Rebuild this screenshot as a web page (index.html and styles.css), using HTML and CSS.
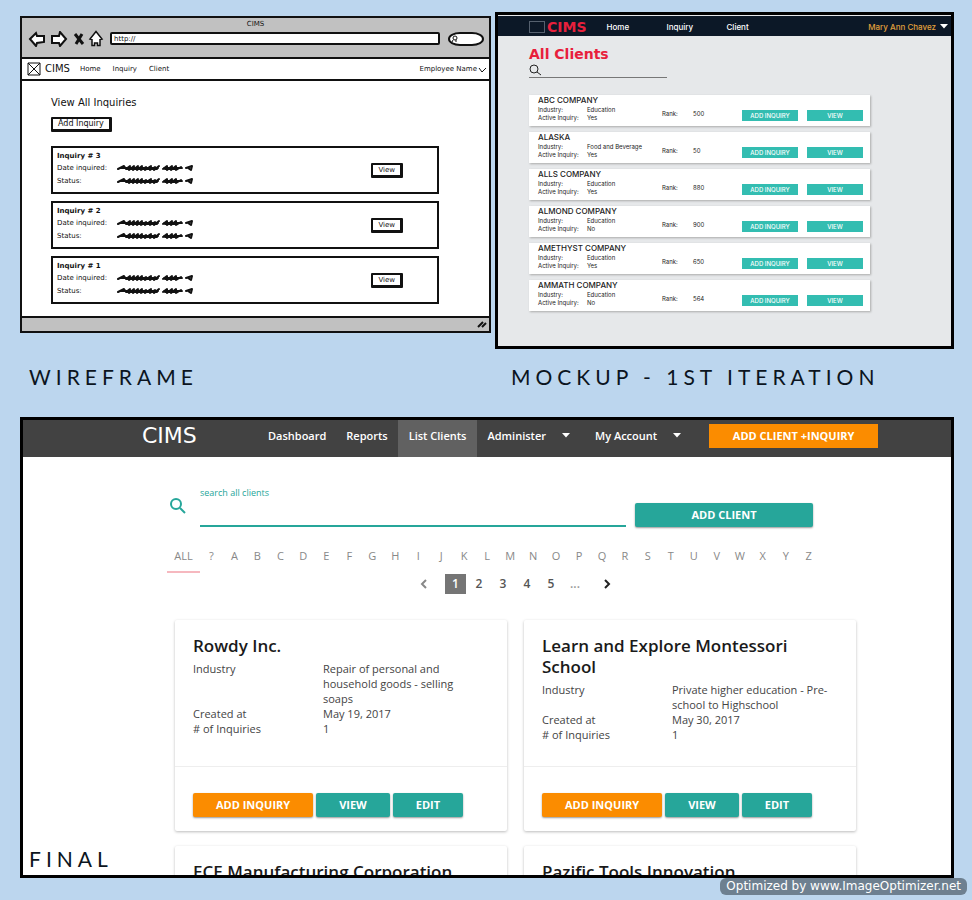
FILE: index.html
```html
<!DOCTYPE html>
<html lang="en">
<head>
<meta charset="utf-8">
<title>CIMS design stages</title>
<link rel="stylesheet" href="styles.css">
</head>
<body>
<svg class="defs" aria-hidden="true">
  <symbol id="scribble" viewBox="0 0 76 8">
    <path d="M1 5 7 2 9 5 13 2 12 6 17 2 16 6 21 2 20 6 25 2 24 6 29 3 28 6 34 2 33 6 38 3 37 6 42 2M4 4H41M9 5H40M46 5 50 2 50 6 55 2 54 6 59 2 59 6 64 3M47 4H65M48 5H60M69 4 75 2 74 6 71 4" fill="none" stroke="#111" stroke-width="2" stroke-linejoin="round" stroke-linecap="round"/>
  </symbol>
  <symbol id="caret" viewBox="0 0 8 5"><path d="M0 0H8L4 4.500Z" fill="currentColor"/></symbol>
</svg>
<main class="board">
  <div class="stages">
    <figure class="stage stage-wire">
      <div class="wire">
        <header class="browser">
          <div class="browser-title">CIMS</div>
          <div class="browser-bar">
            <svg class="arrow" viewBox="0 0 18 16"><path d="M2 8 8 2 9 5 16 5 16 11 9 12 8 15Z"/></svg>
            <svg class="arrow" viewBox="0 0 18 16"><path d="M16 8 10 1 9 5 2 5 2 12 9 12 10 15Z"/></svg>
            <svg class="stop" viewBox="0 0 12 16"><path d="M2 3 10 13M9 3 3 13"/></svg>
            <svg class="house" viewBox="0 0 16 17"><path d="M8 1.500 14 9 12 9.500 12 15.500 9.500 15.500 9.500 13 6.500 13 6.500 15.500 4 15.500 4 9.500 2 9Z"/></svg>
            <input class="url" type="text" value="http://" aria-label="Address">
            <span class="lens"><svg viewBox="0 0 8 8"><circle cx="5" cy="3" r="2"/><path d="M3 5 2 7M6 5V7"/></svg></span>
          </div>
        </header>
        <nav class="wire-nav">
          <svg class="cross" viewBox="0 0 14 14"><path d="M1 1H13V13H1ZM1 1 13 13M13 1 1 13"/></svg>
          <b>CIMS</b>
          <a href="#">Home</a><a href="#">Inquiry</a><a href="#">Client</a>
          <a class="employee" href="#">Employee Name<svg viewBox="0 0 8 6"><path d="M1 1 4 5 8 1"/></svg></a>
        </nav>
        <section class="wire-body">
          <h2>View All Inquiries</h2>
          <button class="sketch-btn add">Add Inquiry</button>
          <article class="inquiry">
            <div><h3>Inquiry # 3</h3>
            <dl><dt>Date inquired:</dt><dd><svg><use href="#scribble"/></svg></dd><dt>Status:</dt><dd><svg><use href="#scribble"/></svg></dd></dl></div>
            <button class="sketch-btn">View</button>
          </article>
          <article class="inquiry">
            <div><h3>Inquiry # 2</h3>
            <dl><dt>Date inquired:</dt><dd><svg><use href="#scribble"/></svg></dd><dt>Status:</dt><dd><svg><use href="#scribble"/></svg></dd></dl></div>
            <button class="sketch-btn">View</button>
          </article>
          <article class="inquiry">
            <div><h3>Inquiry # 1</h3>
            <dl><dt>Date inquired:</dt><dd><svg><use href="#scribble"/></svg></dd><dt>Status:</dt><dd><svg><use href="#scribble"/></svg></dd></dl></div>
            <button class="sketch-btn">View</button>
          </article>
        </section>
        <footer class="wire-foot"><svg viewBox="0 0 10 9"><path d="M1 7 6 2M5 7 9 3"/></svg></footer>
      </div>
      <figcaption>WIREFRAME</figcaption>
    </figure>

    <figure class="stage stage-mock">
      <div class="mock">
        <nav class="mock-nav">
          <span class="mock-box"></span><b>CIMS</b>
          <a href="#">Home</a><a href="#">Inquiry</a><a href="#">Client</a>
          <a class="user" href="#">Mary Ann Chavez<svg><use href="#caret"/></svg></a>
        </nav>
        <section class="mock-body">
          <h2>All Clients</h2>
          <label class="mock-search"><svg viewBox="0 0 12 12"><circle cx="5" cy="5" r="4"/><path d="M8 8 12 11"/></svg><input type="text" aria-label="Search clients"></label>
          <article class="client"><h3>ABC COMPANY</h3><dl><dt>Industry:</dt><dd>Education</dd><dt>Active Inquiry:</dt><dd>Yes</dd></dl><span>Rank:</span><span>500</span><button>ADD INQUIRY</button><button>VIEW</button></article>
          <article class="client"><h3>ALASKA</h3><dl><dt>Industry:</dt><dd>Food and Beverage</dd><dt>Active Inquiry:</dt><dd>Yes</dd></dl><span>Rank:</span><span>50</span><button>ADD INQUIRY</button><button>VIEW</button></article>
          <article class="client"><h3>ALLS COMPANY</h3><dl><dt>Industry:</dt><dd>Education</dd><dt>Active Inquiry:</dt><dd>Yes</dd></dl><span>Rank:</span><span>880</span><button>ADD INQUIRY</button><button>VIEW</button></article>
          <article class="client"><h3>ALMOND COMPANY</h3><dl><dt>Industry:</dt><dd>Education</dd><dt>Active Inquiry:</dt><dd>No</dd></dl><span>Rank:</span><span>900</span><button>ADD INQUIRY</button><button>VIEW</button></article>
          <article class="client"><h3>AMETHYST COMPANY</h3><dl><dt>Industry:</dt><dd>Education</dd><dt>Active Inquiry:</dt><dd>Yes</dd></dl><span>Rank:</span><span>650</span><button>ADD INQUIRY</button><button>VIEW</button></article>
          <article class="client"><h3>AMMATH COMPANY</h3><dl><dt>Industry:</dt><dd>Education</dd><dt>Active Inquiry:</dt><dd>No</dd></dl><span>Rank:</span><span>564</span><button>ADD INQUIRY</button><button>VIEW</button></article>
        </section>
      </div>
      <figcaption>MOCKUP - 1ST ITERATION</figcaption>
    </figure>
  </div>

  <figure class="final">
    <nav class="top-nav">
      <b>CIMS</b>
      <a href="#">Dashboard</a><a href="#">Reports</a><a class="active" href="#">List Clients</a>
      <a href="#">Administer<svg><use href="#caret"/></svg></a>
      <a href="#">My Account<svg><use href="#caret"/></svg></a>
      <button class="btn orange">ADD CLIENT +INQUIRY</button>
    </nav>
    <div class="final-body">
      <div class="search-row">
        <svg class="search-icon" viewBox="0 0 18 18"><circle cx="7" cy="7" r="5"/><path d="M11 11 16 16"/></svg>
        <div class="field"><label for="search">search all clients</label><input id="search" type="text"></div>
        <button class="btn">ADD CLIENT</button>
      </div>
      <nav class="letters">
        <a class="all" href="#">ALL</a><a href="#">?</a><a href="#">A</a><a href="#">B</a><a href="#">C</a><a href="#">D</a><a href="#">E</a><a href="#">F</a><a href="#">G</a><a href="#">H</a><a href="#">I</a><a href="#">J</a><a href="#">K</a><a href="#">L</a><a href="#">M</a><a href="#">N</a><a href="#">O</a><a href="#">P</a><a href="#">Q</a><a href="#">R</a><a href="#">S</a><a href="#">T</a><a href="#">U</a><a href="#">V</a><a href="#">W</a><a href="#">X</a><a href="#">Y</a><a href="#">Z</a>
      </nav>
      <nav class="pages">
        <a class="step prev" href="#" aria-label="Previous"><svg viewBox="0 0 8 12"><path d="M6 2 2 6 6 10"/></svg></a>
        <a class="current" href="#">1</a><a href="#">2</a><a href="#">3</a><a href="#">4</a><a href="#">5</a><span>...</span>
        <a class="step next" href="#" aria-label="Next"><svg viewBox="0 0 8 12"><path d="M2 2 6 6 2 10"/></svg></a>
      </nav>
      <div class="cards">
        <article class="card">
          <div class="card-text"><h2>Rowdy Inc.</h2>
          <dl><dt>Industry</dt><dd>Repair of personal and household goods - selling soaps</dd><dt>Created at</dt><dd>May 19, 2017</dd><dt># of Inquiries</dt><dd>1</dd></dl></div>
          <div class="actions"><button class="btn orange">ADD INQUIRY</button><button class="btn">VIEW</button><button class="btn">EDIT</button></div>
        </article>
        <article class="card">
          <div class="card-text"><h2>Learn and Explore Montessori School</h2>
          <dl><dt>Industry</dt><dd>Private higher education - Pre-school to Highschool</dd><dt>Created at</dt><dd>May 30, 2017</dd><dt># of Inquiries</dt><dd>1</dd></dl></div>
          <div class="actions"><button class="btn orange">ADD INQUIRY</button><button class="btn">VIEW</button><button class="btn">EDIT</button></div>
        </article>
        <article class="card"><div class="card-text"><h2>ECE Manufacturing Corporation</h2></div></article>
        <article class="card"><div class="card-text"><h2>Pazific Tools Innovation</h2></div></article>
      </div>
    </div>
    <figcaption>FINAL</figcaption>
  </figure>
</main>
<div class="watermark">Optimized by www.ImageOptimizer.net</div>
</body>
</html>
```

FILE: styles.css
```css
* { box-sizing: border-box; margin: 0; padding: 0; }
body { background: #bcd6ee; color: #111; }
a { color: inherit; text-decoration: none; }
button, input { font: inherit; color: inherit; border: 0; background: none; min-width: 0; }
svg { display: block; flex: none; fill: none; stroke: currentColor; }
.defs { position: absolute; width: 0; height: 0; }

.board { height: 100vh; min-height: 700px; display: flex; flex-direction: column; padding: 12px 18px 22px 20px; }
.stages { display: grid; grid-template-columns: 471fr 459fr; gap: 4px; padding-bottom: 28px; }
.stage { display: flex; flex-direction: column; justify-content: space-between; }
figcaption { font: 21px/24px Lato, sans-serif; letter-spacing: 5px; color: #0b1420; }
.stage figcaption { padding-left: 9px; }
.stage-mock figcaption { margin-top: 16px; padding-left: 16px; }

/* Wireframe */
.wire { margin-top: 4px; border: 2px solid #111; background: #fff; font: 7px/10px "DejaVu Sans", sans-serif; }
.browser { background: #c1c1c1; border-bottom: 2px solid #111; height: 41px; }
.browser-title { text-align: center; line-height: 12px; }
.browser-bar { display: flex; align-items: center; padding: 0 5px 0 6px; }
.browser-bar svg { stroke: #111; stroke-width: 2; fill: #fff; }
.arrow { width: 18px; height: 16px; margin-right: 4px; }
.browser-bar .stop { width: 12px; height: 16px; margin: 0 3px 0 1px; stroke-width: 3; }
.browser-bar .house { width: 16px; height: 17px; margin-right: 6px; stroke-width: 1.5; }
.url { flex: 1; height: 13px; border: 2px solid #111; border-radius: 2px; background: #fff; padding-left: 2px; }
.lens { width: 36px; height: 14px; margin-left: 8px; border: 2px solid #111; border-radius: 12px / 7px; background: #fff; }
.lens svg { width: 8px; height: 8px; margin-top: 1px; stroke-width: 1; }
.wire-nav { display: flex; align-items: center; height: 22px; border-bottom: 2px solid #111; padding: 0 3px 0 5px; }
.cross { width: 14px; height: 14px; }
.wire-nav b { font-size: 10px; font-weight: 400; margin: 0 10px 0 4px; }
.wire-nav a { margin-right: 12px; }
.wire-nav .employee { display: flex; gap: 1px; margin: 0 0 0 auto; }
.employee svg { width: 8px; height: 6px; margin-top: 3px; }
.wire-body { padding: 14px 50px 12px 29px; }
.wire-body h2 { font-size: 10px; font-weight: 400; line-height: 15px; }
.sketch-btn { height: 15px; padding: 0 5px; line-height: 10px; border: 2px solid #111; border-right-width: 3px; border-bottom-width: 3px; border-radius: 1px; background: #fff; }
.sketch-btn.add { display: block; font-size: 8px; padding: 0 5px; margin: 7px 0 14px; }
.inquiry { display: flex; justify-content: space-between; align-items: center; border: 2px solid #111; height: 48px; padding: 0 34px 0 4px; }
.inquiry > div { padding-bottom: 3px; }
.inquiry + .inquiry { margin-top: 7px; }
.inquiry h3 { font-size: 7px; line-height: 12px; }
.inquiry dl { display: grid; grid-template-columns: 60px 76px; line-height: 13px; }
.inquiry dd { align-self: center; }
.inquiry dl svg { width: 76px; height: 8px; }
.wire-foot { display: flex; justify-content: flex-end; align-items: center; height: 15px; border-top: 2px solid #111; background: #c1c1c1; padding-right: 2px; }
.wire-foot svg { width: 10px; height: 9px; stroke-width: 2; }

/* Mockup */
.mock { border: 3px solid #000; background: #e6e8ea; font: 6px/8px Inter, sans-serif; color: #222; }
.mock-nav { display: flex; align-items: center; height: 20px; margin-top: 1px; padding: 1px 3px 0 31px; background: #0c1827; color: #fff; font-size: 8px; line-height: 12px; font-weight: 500; }
.mock-box { width: 16px; height: 12px; border: 1px solid #55606e; }
.mock-nav b { font: 700 14px/14px "DejaVu Sans", sans-serif; color: #e8203c; margin: 0 20px 0 2px; }
.mock-nav a { width: 60px; }
.mock-nav .user { display: flex; align-items: center; gap: 4px; width: auto; margin-left: auto; color: #e0a03c; }
.user svg { width: 8px; height: 5px; color: #fff; stroke: none; }
.mock-body { padding: 9px 81px 35px 31px; }
.mock-body h2 { font: 700 14px/18px "DejaVu Sans", sans-serif; color: #e8203c; }
.mock-search { display: flex; align-items: center; width: 138px; height: 15px; border-bottom: 1px solid #777; margin-bottom: 17px; }
.mock-search svg { width: 12px; height: 12px; }
.mock-search input { flex: 1; }
.client { display: grid; grid-template-columns: 124px 31px 49px 56px 56px; grid-template-rows: 11px 16px; align-items: center; height: 31px; padding: 0 8px 4px 9px; background: #fff; box-shadow: 1px 1px 2px #aaa; }
.client + .client { margin-top: 6px; }
.client h3 { grid-column: 1 / -1; font-size: 8px; line-height: 11px; font-weight: 500; }
.client dl { display: grid; grid-template-columns: 49px 1fr; }
.client button { height: 11px; margin-bottom: 1px; background: #33bdb1; color: #fff; font-weight: 500; line-height: 11px; align-self: end; }
.client button:last-child { margin-left: 9px; width: 56px; }

/* Final */
.final { position: relative; flex: 1; min-height: 0; overflow: hidden; border: 3px solid #000; background: #fff; font-family: "Open Sans", sans-serif; }
.final figcaption { position: absolute; left: 6px; bottom: 4px; }
.top-nav { display: flex; height: 37px; padding-left: 119px; background: #424242; color: #fff; font-size: 11px; font-weight: 600; line-height: 31px; }
.top-nav b { width: 116px; font: 400 22px/31px "DejaVu Sans", sans-serif; }
.top-nav a { display: flex; align-items: center; height: 37px; padding: 0 10px 6px; }
.top-nav svg { width: 8px; height: 5px; margin: 0 5px 0 16px; stroke: none; }
.top-nav .active { padding: 0 11px 6px; background: #616161; }
.top-nav .btn { width: 169px; margin: 4px 0 0 13px; border-radius: 0; box-shadow: none; }
.btn { height: 24px; padding: 0 23px; border-radius: 2px; background: #26a69a; color: #fff; font-size: 11px; font-weight: 700; line-height: 24px; box-shadow: 0 1px 2px #999; }
.btn.orange { background: #fb8c00; }
.final-body { width: 712px; max-width: 100%; margin-left: 144px; padding-top: 30px; }
.search-row { display: flex; align-items: flex-end; width: 646px; }
.search-icon { width: 18px; height: 18px; margin: 0 13px 12px 2px; color: #26a69a; stroke-width: 2; }
.field { flex: 1; display: flex; flex-direction: column; border-bottom: 2px solid #26a69a; }
.field label { font-size: 9px; line-height: 12px; color: #26a69a; }
.field input { height: 26px; }
.search-row .btn { width: 178px; margin-left: 9px; }
.letters { display: flex; width: 653px; margin-top: 13px; color: #888; font-size: 11px; line-height: 31px; text-align: center; }
.letters a { flex: 1; }
.letters .all { flex: 0 0 33px; border-bottom: 2px solid #f6b8bf; }
.pages { display: flex; align-items: center; margin: 1px 0 0 245px; font-size: 12px; font-weight: 600; line-height: 20px; color: #555; text-align: center; }
.pages a, .pages span { width: 24px; }
.pages .current { width: 21px; margin: 0 1px; background: #757575; color: #fff; }
.pages svg { width: 8px; height: 12px; margin: auto; stroke-width: 2; }
.pages .prev { margin-right: 8px; color: #888; }
.pages .next { margin-left: 8px; color: #222; }
.pages span { color: #999; }
.cards { display: grid; grid-template-columns: 1fr 1fr; gap: 15px 17px; margin: 26px 23px 0 8px; }
.card { display: flex; flex-direction: column; min-height: 211px; border-radius: 2px; box-shadow: 0 1px 3px #bbb; }
.card-text { flex: 1; padding: 15px 18px; font-size: 11px; line-height: 15px; color: #444; }
.card h2 { font-size: 17px; line-height: 21px; font-weight: 600; color: #1a1a1a; }
.card dl { display: grid; grid-template-columns: 130px 1fr; margin-top: 5px; padding-right: 8px; }
.actions { display: flex; gap: 3px; border-top: 1px solid #eee; padding: 26px 18px 14px; }

.watermark { position: absolute; right: 5px; bottom: 5px; padding: 0 6px; border-radius: 6px; background: #6e8090; color: #fff; font: 12px/17px "DejaVu Sans", sans-serif; }
```
